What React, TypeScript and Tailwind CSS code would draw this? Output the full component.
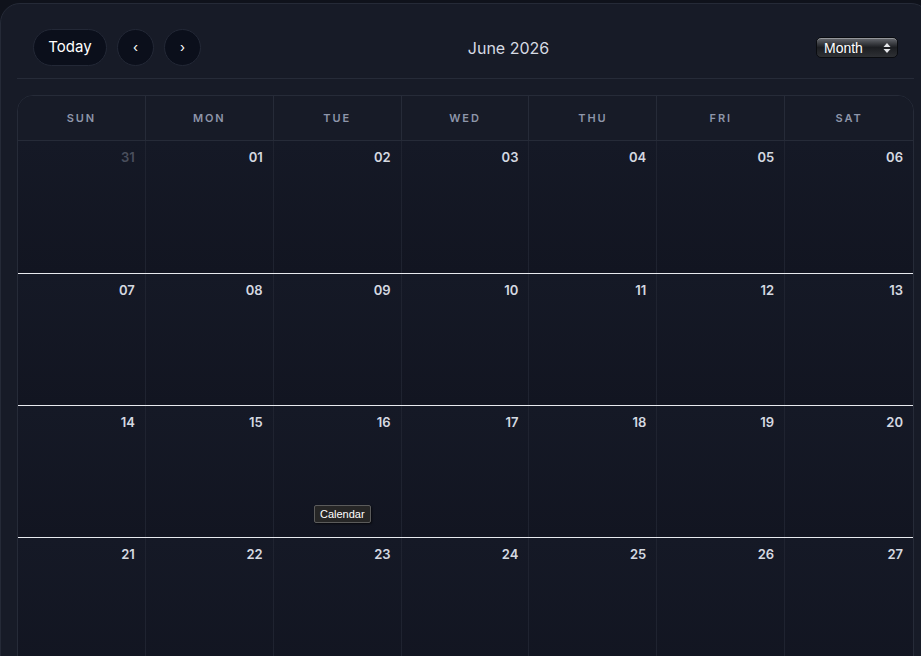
import { useState } from "react"

const WEEKDAYS = ["Sun", "Mon", "Tue", "Wed", "Thu", "Fri", "Sat"]

// June 2026 starts on a Monday, so the first row opens with May 31.
// Only the four weeks that fit the viewport are drawn.
const buildWeeks = () => {
  const weeks: { day: number; outside: boolean }[][] = []
  let day = 31
  let outside = true
  for (let w = 0; w < 4; w++) {
    const row: { day: number; outside: boolean }[] = []
    for (let d = 0; d < 7; d++) {
      row.push({ day, outside })
      day++
      if (outside && day > 31) {
        day = 1
        outside = false
      }
    }
    weeks.push(row)
  }
  return weeks
}

const pad = (n: number) => (n < 10 ? `0${n}` : `${n}`)

export default function App() {
  const [view, setView] = useState("Month")
  const weeks = buildWeeks()

  return (
    <div
      className="h-[656px] w-[921px] overflow-hidden bg-[#0f121b] pt-[3px]"
      style={{ fontFamily: "Inter, 'Noto Sans', sans-serif" }}
    >
      <div className="h-[700px] w-[931px] rounded-tl-[20px] rounded-tr-[20px] border border-[#252a37] bg-[#171b27] px-4">
        {/* toolbar */}
        <div className="flex items-center justify-between border-b border-[#262b38] px-4 pt-[25px] pb-[12px]">
          <div className="flex items-center gap-[10px]">
            <button className="h-[37px] w-[74px] rounded-full border border-[#232836] bg-[#0b0f1b] text-[15px] font-normal text-white">
              Today
            </button>
            <button className="flex h-[37px] w-[37px] items-center justify-center rounded-full border border-[#232836] bg-[#0b0f1b] text-[13px] text-white">
              ‹
            </button>
            <button className="flex h-[37px] w-[37px] items-center justify-center rounded-full border border-[#232836] bg-[#0b0f1b] text-[13px] text-white">
              ›
            </button>
          </div>
          <h2 className="text-[16px] font-normal text-[#d6dae3]">June 2026</h2>
          <button
            onClick={() => setView(view)}
            className="flex h-[21px] w-[82px] items-center justify-between rounded-[5px] border border-[#0a0c10] bg-gradient-to-b from-[#6a6d73] via-[#1c1e22] to-[#2e3034] pl-[7px] pr-[6px] text-[14px] leading-none text-white shadow-[inset_0_1px_0_rgba(255,255,255,0.3)]"
            style={{ fontFamily: "'Liberation Sans', Arial, sans-serif" }}
          >
            <span>{view}</span>
            <svg width="8" height="12" viewBox="0 0 8 12" fill="#e5e7eb">
              <path d="M4 1 L7.5 5 H0.5 Z" />
              <path d="M4 11 L7.5 7 H0.5 Z" />
            </svg>
          </button>
        </div>

        {/* month grid */}
        <div className="relative mt-4 overflow-hidden rounded-t-2xl border border-[#262b38] bg-[#141824]">
          <div className="grid grid-cols-7 border-b border-[#262b38] bg-[#171b27]">
            {WEEKDAYS.map((d, i) => (
              <div
                key={d}
                className={`flex h-[44px] items-center justify-center text-[11px] font-semibold uppercase tracking-[0.17em] text-[#8e96aa] ${
                  i < 6 ? "border-r border-[#262b38]" : ""
                }`}
              >
                {d}
              </div>
            ))}
          </div>

          {weeks.map((row, wi) => (
            <div
              key={wi}
              className={`grid grid-cols-7 ${wi > 0 ? "border-t border-[#e8eaef]" : ""}`}
            >
              {row.map((c, ci) => (
                <div
                  key={ci}
                  className={`${wi === 0 ? "h-[132px]" : "h-[131px]"} bg-gradient-to-b from-[#151926] to-[#121521] pt-[7px] pr-[10px] text-right text-[13px] font-semibold ${
                    ci < 6 ? "border-r border-[#1f2330]" : ""
                  } ${c.outside ? "text-[#4a4f5d]" : "text-[#d5d9e1]"}`}
                >
                  {pad(c.day)}
                </div>
              ))}
            </div>
          ))}

          {/* hover tooltip */}
          <div
            className="absolute left-[296px] top-[409px] rounded-[2px] border border-[#5b5b5b] bg-[#262626] px-[5px] py-[2px] text-[11px] leading-[12px] text-white shadow-[1px_1px_2px_rgba(0,0,0,0.6)]"
            style={{ fontFamily: "'Liberation Sans', Arial, sans-serif" }}
          >
            Calendar
          </div>
        </div>
      </div>
    </div>
  )
}
